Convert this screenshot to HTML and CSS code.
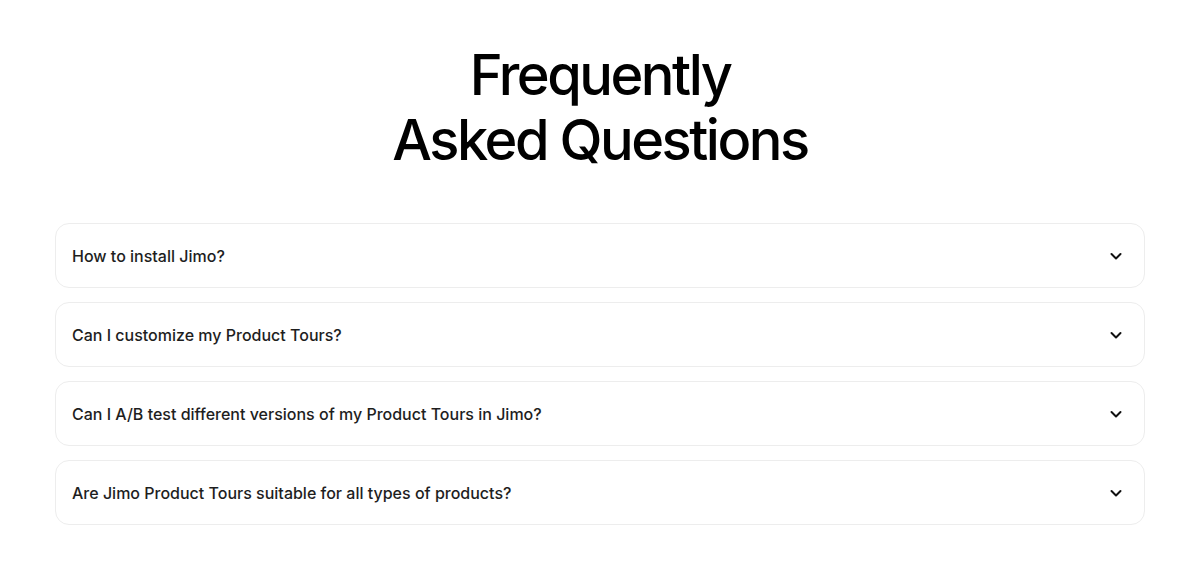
FILE: index.html
```html
<!DOCTYPE html>
<html lang="en">
<head>
    <meta charset="UTF-8">
    <meta name="viewport" content="width=device-width, initial-scale=1.0">
    <title>FAQ</title>
    <link rel="stylesheet" href="styles.css">
</head>
<body>

<section class="faq">
    <h2 class="faq-title">Frequently<br>Asked Questions</h2>

    <div class="faq-list">
        <div class="faq-item">
            <span class="faq-question">How to install Jimo?</span>
            <svg class="chevron" width="14" height="14" viewBox="0 0 14 14"><path d="M2.5 5l4.5 4.5 4.5-4.5" /></svg>
        </div>
        <div class="faq-item">
            <span class="faq-question">Can I customize my Product Tours?</span>
            <svg class="chevron" width="14" height="14" viewBox="0 0 14 14"><path d="M2.5 5l4.5 4.5 4.5-4.5" /></svg>
        </div>
        <div class="faq-item">
            <span class="faq-question">Can I A/B test different versions of my Product Tours in Jimo?</span>
            <svg class="chevron" width="14" height="14" viewBox="0 0 14 14"><path d="M2.5 5l4.5 4.5 4.5-4.5" /></svg>
        </div>
        <div class="faq-item">
            <span class="faq-question">Are Jimo Product Tours suitable for all types of products?</span>
            <svg class="chevron" width="14" height="14" viewBox="0 0 14 14"><path d="M2.5 5l4.5 4.5 4.5-4.5" /></svg>
        </div>
    </div>
</section>

</body>
</html>
```

FILE: styles.css
```css
body {
    margin: 0;
    font-family: Inter, "Noto Sans", sans-serif;
    background-color: #fff;
    color: #111;
}

.faq {
    max-width: 1090px;
    margin: 0 auto;
    padding: 43px 0 40px;
}

.faq-title {
    margin: 0 0 50px;
    font-size: 56px;
    line-height: 65px;
    font-weight: 500;
    letter-spacing: -2.5px;
    text-align: center;
    color: #000;
}

.faq-list {
    display: flex;
    flex-direction: column;
    gap: 14px;
}

.faq-item {
    display: flex;
    align-items: center;
    justify-content: space-between;
    height: 63px;
    padding: 0 21px 0 16px;
    border: 1px solid #ededed;
    border-radius: 14px;
}

.faq-question {
    font-size: 16px;
    font-weight: 500;
    color: #1e1e1e;
}

.chevron path {
    fill: none;
    stroke: #111;
    stroke-width: 2;
    stroke-linecap: round;
    stroke-linejoin: round;
}
```
